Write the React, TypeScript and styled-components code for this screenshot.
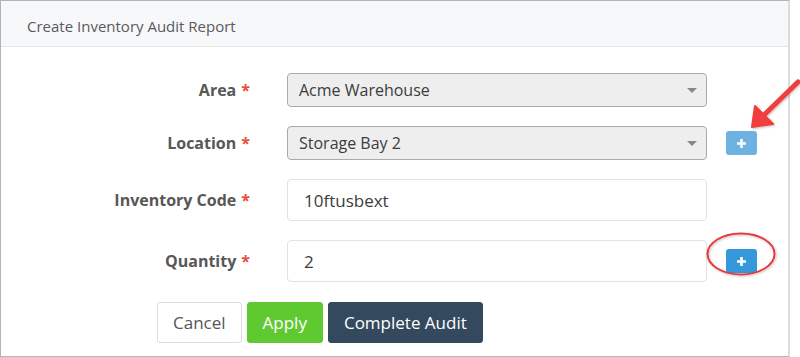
import React from 'react'
import styled, { createGlobalStyle } from 'styled-components'

const GlobalStyle = createGlobalStyle`
    body {
        margin: 0;
        background: #fff;
        font-family: 'Open Sans', 'DejaVu Sans', sans-serif;
    }
`

const Page = styled.div`
    position: relative;
    width: 800px;
    height: 357px;
    overflow: hidden;
`

const Card = styled.div`
    width: 787px;
    height: 355px;
    border: 1px solid #b4b4b4;
    border-right: 2px solid #dcdcdc;
    display: flex;
    flex-direction: column;
`

const Header = styled.div`
    height: 46px;
    background: #f7f8fa;
    border-bottom: 1px solid #e4e6e8;
    display: flex;
    align-items: center;
    padding-left: 26px;
    font-size: 15px;
    color: #5a5a5a;
    padding-top: 4px;
    box-sizing: border-box;
`

const Body = styled.div`
    padding-top: 26px;
`

const Form = styled.div`
    display: grid;
    grid-template-columns: 286px 420px auto;
    row-gap: 19px;
    align-items: center;
`

const Label = styled.div`
    text-align: right;
    padding-right: 37px;
    font-size: 16px;
    font-weight: 700;
    color: #575757;
    white-space: nowrap;

    span {
        color: #e74c3c;
        margin-left: 5px;
    }
`

const Select = styled.div`
    position: relative;
    height: 34px;
    box-sizing: border-box;
    background: #eeeeee;
    border: 1px solid #aaaaaa;
    border-radius: 4px;
    display: flex;
    align-items: center;
    padding-left: 11px;
    font-size: 16px;
    color: #3c3c3c;

    &::after {
        content: '';
        position: absolute;
        right: 9px;
        top: 14px;
        border-left: 5px solid transparent;
        border-right: 5px solid transparent;
        border-top: 5px solid #888;
    }
`

const Input = styled.div`
    height: 42px;
    box-sizing: border-box;
    background: #fff;
    border: 1px solid #e3e3e3;
    border-radius: 4px;
    display: flex;
    align-items: center;
    padding-left: 16px;
    font-size: 17px;
    color: #3c3c3c;
`

const Cell = styled.div`
    padding-left: 19px;
`

const AddButton = styled.div<{ $muted?: boolean }>`
    width: 31px;
    height: 24px;
    border-radius: 3px;
    background: ${(p) => (p.$muted ? '#6db2e1' : '#3498db')};
    color: #fff;
    display: flex;
    align-items: center;
    justify-content: center;
`

const Footer = styled.div`
    display: flex;
    gap: 5px;
    padding-left: 156px;
    margin-top: 20px;
`

const Button = styled.div<{ $kind: 'default' | 'success' | 'dark' }>`
    height: 41px;
    box-sizing: border-box;
    padding: 0 15px;
    border-radius: 3px;
    display: flex;
    align-items: center;
    font-size: 17px;
    border: 1px solid
        ${(p) =>
            p.$kind === 'default'
                ? '#dddddd'
                : p.$kind === 'success'
                ? '#5fc932'
                : '#34495e'};
    background: ${(p) =>
        p.$kind === 'default'
            ? '#fff'
            : p.$kind === 'success'
            ? '#5fc932'
            : '#34495e'};
    color: ${(p) => (p.$kind === 'default' ? '#555' : '#fff')};
`

const Overlay = styled.svg`
    position: absolute;
    left: 0;
    top: 0;
    pointer-events: none;
`

const Plus = () => (
    <svg width="11" height="11" viewBox="0 0 11 11">
        <path d="M5.5 1v9M1 5.5h9" stroke="#fff" strokeWidth="2.6" />
    </svg>
)

export default function App(): JSX.Element {
    return (
        <Page>
            <GlobalStyle />
            <Card>
                <Header>Create Inventory Audit Report</Header>
                <Body>
                    <Form>
                        <Label>
                            Area<span>*</span>
                        </Label>
                        <Select>Acme Warehouse</Select>
                        <div />

                        <Label>
                            Location<span>*</span>
                        </Label>
                        <Select>Storage Bay 2</Select>
                        <Cell>
                            <AddButton $muted>
                                <Plus />
                            </AddButton>
                        </Cell>

                        <Label>
                            Inventory Code<span>*</span>
                        </Label>
                        <Input>10ftusbext</Input>
                        <div />

                        <Label>
                            Quantity<span>*</span>
                        </Label>
                        <Input>2</Input>
                        <Cell>
                            <AddButton>
                                <Plus />
                            </AddButton>
                        </Cell>
                    </Form>
                    <Footer>
                        <Button $kind="default">Cancel</Button>
                        <Button $kind="success">Apply</Button>
                        <Button $kind="dark">Complete Audit</Button>
                    </Footer>
                </Body>
            </Card>
            <Overlay width="800" height="357">
                <defs>
                    <filter id="sh" x="-20%" y="-20%" width="140%" height="140%">
                        <feDropShadow dx="1" dy="1" stdDeviation="1" floodColor="#000" floodOpacity="0.25" />
                    </filter>
                </defs>
                <g filter="url(#sh)">
                    <path d="M798 82 L764 115" stroke="#ef3e3f" strokeWidth="5" strokeLinecap="round" />
                    <path d="M752 127 L755 106 L773 124 Z" fill="#ef3e3f" stroke="#ef3e3f" strokeWidth="2" strokeLinejoin="round" />
                    <ellipse cx="741" cy="254" rx="33.5" ry="20.5" fill="none" stroke="#e8383a" strokeWidth="2" />
                </g>
            </Overlay>
        </Page>
    )
}
